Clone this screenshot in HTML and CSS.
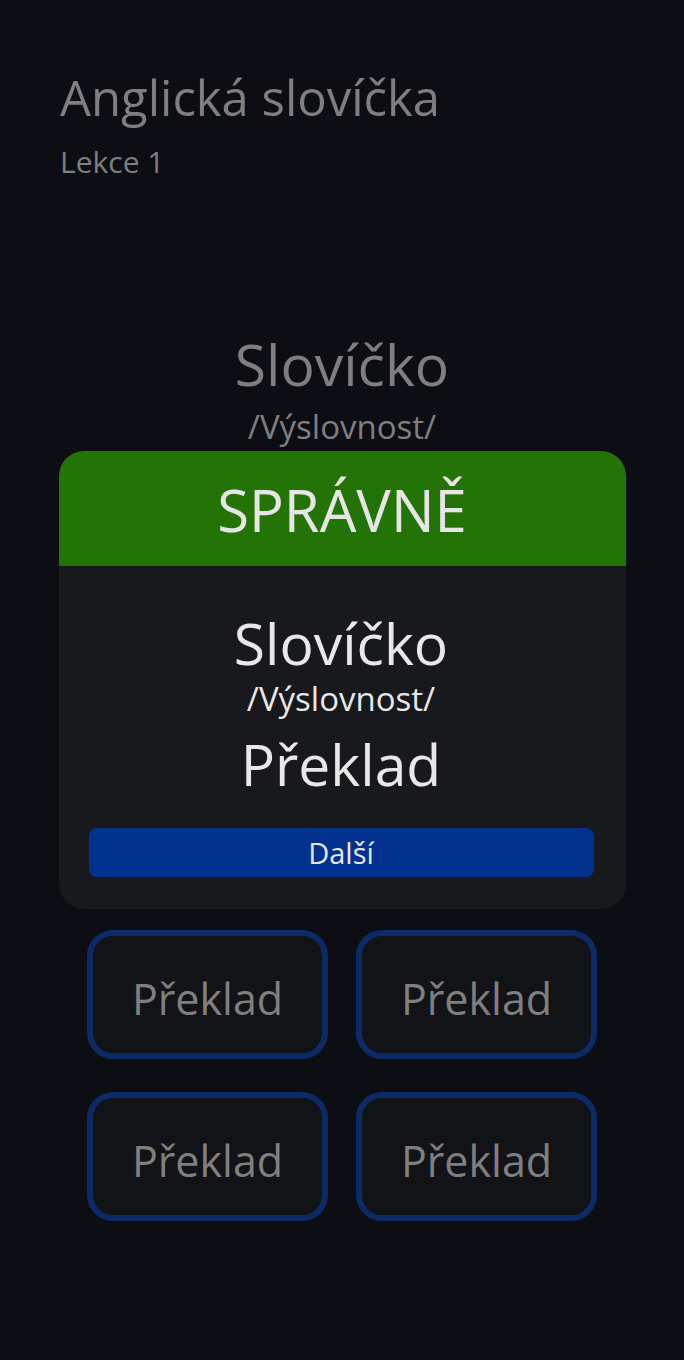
FILE: index.html
```html
<!DOCTYPE html>
<html lang="cs">
<head>
<meta charset="utf-8">
<title>Anglická slovíčka</title>
<link rel="stylesheet" href="styles.css">
</head>
<body>
  <header class="top">
    <h1 class="title">Anglická slovíčka</h1>
    <p class="lesson">Lekce 1</p>
  </header>

  <section class="prompt">
    <div class="prompt-word">Slovíčko</div>
    <div class="prompt-pron">/Výslovnost/</div>
  </section>

  <section class="result">
    <div class="result-head">SPRÁVNĚ</div>
    <div class="result-body">
      <div class="res-word">Slovíčko</div>
      <div class="res-pron">/Výslovnost/</div>
      <div class="res-trans">Překlad</div>
      <button class="next">Další</button>
    </div>
  </section>

  <section class="answers">
    <button class="answer">Překlad</button>
    <button class="answer">Překlad</button>
    <button class="answer">Překlad</button>
    <button class="answer">Překlad</button>
  </section>
</body>
</html>
```

FILE: styles.css
```css
html, body {
  margin: 0;
  padding: 0;
}

body {
  background: #0c0e13;
  font-family: "Open Sans", "Noto Sans", "DejaVu Sans", sans-serif;
  width: 684px;
  min-height: 1360px;
}

.top {
  padding: 69px 0 0 60px;
}

.title {
  margin: 0;
  font-size: 49px;
  line-height: 56px;
  font-weight: 400;
  color: #7f7f7f;
}

.lesson {
  margin: 19px 0 0;
  font-size: 30px;
  line-height: 36px;
  color: #7f7f7f;
}

.prompt {
  margin-top: 152px;
  text-align: center;
  color: #7f7f7f;
}

.prompt-word {
  font-size: 57px;
  line-height: 64px;
}

.prompt-pron {
  margin-top: 11px;
  font-size: 33px;
  line-height: 40px;
}

.result {
  width: 567px;
  margin: 4px auto 0;
  border-radius: 25px;
  overflow: hidden;
  background: #18191c;
}

.result-head {
  height: 115px;
  box-sizing: border-box;
  padding-top: 2px;
  background: #247306;
  color: #e6e6e6;
  text-align: center;
  font-size: 58px;
  line-height: 113px;
}

.result-body {
  padding: 45px 32px 32px 30px;
  text-align: center;
  color: #e8e8e8;
}

.res-word {
  font-size: 57px;
  line-height: 64px;
}

.res-pron {
  margin-top: 4px;
  font-size: 33px;
  line-height: 40px;
}

.res-trans {
  margin-top: 13px;
  font-size: 57px;
  line-height: 64px;
}

.next {
  display: block;
  width: 100%;
  height: 49px;
  margin-top: 32px;
  padding: 0;
  border: 0;
  border-radius: 8px;
  background: #02318f;
  color: #e4e8f4;
  font-family: inherit;
  font-size: 29px;
  line-height: 49px;
}

.answers {
  width: 510px;
  margin: 21px auto 0;
  display: grid;
  grid-template-columns: 241px 241px;
  column-gap: 28px;
  row-gap: 33px;
}

.answer {
  height: 129px;
  box-sizing: border-box;
  padding: 8px 0 0;
  border: 6px solid #0b2a66;
  border-radius: 26px;
  background: #121317;
  color: #7f7f7f;
  font-family: inherit;
  font-size: 43px;
  line-height: 109px;
  text-align: center;
}
```
